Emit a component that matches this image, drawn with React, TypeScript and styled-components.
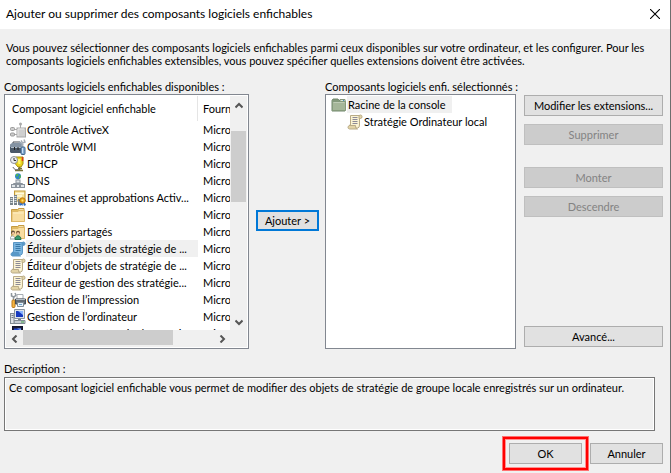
import React from "react";
import styled, { createGlobalStyle, css } from "styled-components";

const GlobalStyle = createGlobalStyle`
  * { box-sizing: border-box; }
  html, body, #root { margin: 0; padding: 0; height: 100%; }
  body {
    font-family: Lato, "Open Sans", sans-serif;
    font-size: 11px;
    line-height: 13px;
    color: #000;
    background: #f0f0f0;
  }
`;

const Dialog = styled.main`
  display: flex;
  flex-direction: column;
  min-height: 100vh;
  background: #f0f0f0;
  border-right: 1px solid #6e6e6e;
`;

const TitleBar = styled.header`
  display: flex;
  align-items: center;
  justify-content: space-between;
  height: 29px;
  padding: 0 10px 2px 6px;
  background: #fff;
`;

const Title = styled.h1`
  margin: 0;
  font: 400 12px/16px Lato, "Open Sans", sans-serif;
  white-space: nowrap;
`;

const CloseButton = styled.button`
  display: flex;
  padding: 0;
  border: 0;
  background: none;
`;

const Intro = styled.p`
  margin: 12px 6px 0;
`;

const Columns = styled.section`
  display: grid;
  grid-template-columns: minmax(0, 245fr) auto minmax(0, 191fr) 147px;
  flex: 1;
  min-height: 269px;
  margin: 13px 7px 0 4px;
`;

const Field = styled.div`
  display: flex;
  flex-direction: column;
  gap: 1px;
  min-width: 0;
`;

const FieldLabel = styled.div`
  white-space: nowrap;
`;

const ListFrame = styled.div`
  display: grid;
  grid-template-columns: minmax(0, 1fr) 17px;
  grid-template-rows: minmax(0, 1fr) 17px;
  flex: 1 0 255px;
  height: 255px;
  padding: 1px;
  border: 1px solid #828790;
  background: #fff;
`;

const ListView = styled.div`
  overflow: hidden;
  height: 100%;
`;

const SnapInTable = styled.table`
  width: 100%;
  table-layout: fixed;
  border-collapse: separate;
  border-spacing: 0;
`;

const NameHeader = styled.th`
  width: 192px;
  height: 25px;
  padding: 0 6px;
  border-right: 1px solid #e5e5e5;
  font-weight: 400;
  text-align: left;
  white-space: nowrap;
`;

const VendorHeader = styled.th`
  padding: 0 0 0 5px;
  overflow: hidden;
  font-weight: 400;
  text-align: left;
  white-space: nowrap;
`;

const NameCell = styled.td`
  height: 17px;
  padding: 0 0 0 4px;
  overflow: hidden;
`;

const NameContent = styled.div`
  display: flex;
  align-items: center;
  height: 17px;
`;

const ItemText = styled.span<{ $selected?: boolean }>`
  flex: 1;
  padding-left: 1px;
  line-height: 17px;
  white-space: nowrap;
  background: ${(p) => (p.$selected ? "#f0f0f0" : "transparent")};
`;

const VendorCell = styled.td`
  padding: 0 0 0 5px;
  overflow: hidden;
  white-space: nowrap;
`;

const VScroll = styled.div`
  display: flex;
  flex-direction: column;
  align-items: center;
  background: #f0f0f0;
`;

const HScroll = styled.div`
  display: flex;
  align-items: center;
  background: #f0f0f0;
`;

const ScrollCorner = styled.div`
  background: #f0f0f0;
`;

const ArrowButton = styled.button`
  display: flex;
  align-items: center;
  justify-content: center;
  width: 17px;
  height: 17px;
  padding: 0;
  border: 0;
  background: none;
`;

const VTrack = styled.div`
  flex: 1;
  width: 15px;
  padding-top: 18px;
`;

const VThumb = styled.div`
  height: 71px;
  background: #cdcdcd;
`;

const HTrack = styled.div`
  flex: 1;
  height: 15px;
  margin-bottom: 2px;
`;

const HThumb = styled.div`
  width: 79%;
  height: 15px;
  background: #cdcdcd;
`;

const AddArea = styled.div`
  padding: 130px 6px 0 7px;
`;

const Tree = styled.ul`
  flex: 1;
  margin: 0;
  padding: 1px 5px;
  border: 1px solid #828790;
  background: #fff;
  list-style: none;
`;

const TreeItem = styled.li<{ $depth: number }>`
  display: flex;
  align-items: center;
  height: 17px;
  padding-left: ${(p) => p.$depth * 16}px;
`;

const TreeText = styled.span<{ $selected?: boolean }>`
  padding: 0 6px 0 1px;
  line-height: 17px;
  white-space: nowrap;
  background: ${(p) => (p.$selected ? "#f0f0f0" : "transparent")};
`;

const Actions = styled.div`
  display: flex;
  flex-direction: column;
  gap: 8px;
  padding: 15px 0 2px 8px;
`;

const Spacer = styled.div<{ $grow?: boolean }>`
  ${(p) => (p.$grow ? css`flex: 1;` : css`height: 6px;`)}
`;

const Button = styled.button<{ $width?: number; $primary?: boolean }>`
  width: ${(p) => (p.$width ? `${p.$width}px` : "100%")};
  height: 21px;
  padding: 0;
  border: ${(p) => (p.$primary ? "2px solid #0078d7" : "1px solid #adadad")};
  background: #e1e1e1;
  color: #000;
  font: inherit;
  white-space: nowrap;

  &:disabled {
    border-color: #bfbfbf;
    background: #ccc;
    color: #838383;
  }
`;

const DescriptionField = styled.section`
  display: flex;
  flex-direction: column;
  gap: 2px;
  margin: 13px 15px 0 4px;
`;

const DescriptionBox = styled.div`
  min-height: 54px;
  padding: 3px 4px;
  border: 1px solid #767676;
  box-shadow: inset 0 0 0 1px #fff;
`;

const Footer = styled.footer`
  display: flex;
  justify-content: flex-end;
  gap: 8px;
  padding: 12px 7px 9px;
`;

const Highlight = styled.div`
  position: relative;

  &::after {
    content: "";
    position: absolute;
    inset: -6px;
    border: 2px solid #f00;
    box-shadow: 0 0 0 1px #ff7070, inset 0 0 0 1px #ff9090;
    pointer-events: none;
  }
`;

const Icon = styled.svg.attrs({ width: 16, height: 16, viewBox: "0 0 16 16", "aria-hidden": true })`
  flex: none;
  display: block;
`;

const ActiveXIcon = () => (
  <Icon>
    <path d="M10.5 2.5v4M1 7.500h6M1 12.500h6" stroke="#aaa" />
    <circle cx="10.500" cy="2" r="1.500" fill="#aaa" />
    <rect x=".5" y="5.500" width="4" height="3" rx="1" fill="#ccc" stroke="#999" />
    <rect x=".5" y="11" width="4" height="3" rx="1" fill="#ccc" stroke="#999" />
    <rect x="7" y="6" width="8.500" height="9" fill="#cfcfcf" stroke="#a9a9a9" />
    <path d="M8 14V7h6" fill="none" stroke="#e8e8e8" />
  </Icon>
);

const WmiIcon = () => (
  <Icon>
    <path d="M3 5V3h7v2" fill="none" stroke="#454b52" />
    <path d="M0 5.500 2 4h9l2 2v3H0z" fill="#8493a3" />
    <path d="M0 8h13v6H1L0 13z" fill="#4b5968" />
    <path d="M1 8.500h11" stroke="#aebbc8" />
    <path d="M4.500 8v3M8 8v3" stroke="#222" />
    <path d="m9 3 3 2 2 9" fill="none" stroke="#9aa9b6" strokeWidth="1.500" />
    <path d="M11 1.500 12.500 4 15 3l-1-2.500M13 5l-1 3" fill="none" stroke="#a6aeb7" strokeWidth="1.500" />
    <rect x="11" y="8" width="4" height="7.500" rx="1" fill="#83abd4" stroke="#466789" />
    <path d="M12.500 9v5" stroke="#cde0f3" />
  </Icon>
);

const DhcpIcon = () => (
  <Icon>
    <path d="M5.500 1H13v7l-2 3H8L5.500 8z" fill="#e9d31e" stroke="#a58e12" />
    <path d="M7.500 3h3v5h-2z" fill="#fff66a" />
    <path d="M9.500 11v4M5 14.500h8M8 12.500h4" stroke="#77713a" strokeWidth="1.500" />
    <path d="M12.500 1v4" stroke="#e03b16" strokeWidth="1.500" />
    <path d="M3 11c1 3 4 3 6 2" fill="none" stroke="#64646a" />
    <circle cx="4" cy="4" r="3.500" fill="#eceef0" stroke="#8c9196" />
    <path d="M4 2v2.500h2" fill="none" stroke="#333" />
  </Icon>
);

const DnsIcon = () => (
  <Icon>
    <circle cx="8" cy="3.200" r="3" fill="#2e87c4" />
    <path d="M6 1.500c2-1 3 0 2 1L6.500 4zM9 4l1.500-2L11 4 9 6z" fill="#53b946" />
    <path d="M8 6v3M3.500 12v-1.500h9V12" fill="none" stroke="#89919a" />
    <rect x="6" y="7" width="4" height="3" fill="#e0e5e9" stroke="#8b949e" />
    <rect x="1.500" y="11.500" width="4" height="3" fill="#e0e5e9" stroke="#8b949e" />
    <rect x="6.500" y="11.500" width="3" height="3" fill="#e0e5e9" stroke="#8b949e" />
    <rect x="10.500" y="11.500" width="4" height="3" fill="#e0e5e9" stroke="#8b949e" />
  </Icon>
);

const DomainsIcon = () => (
  <Icon>
    <rect x="4.500" y="1" width="10.500" height="10" fill="#f6e29c" stroke="#c19a38" />
    <path d="M5.500 3.500h8.500M7 6h5" stroke="#fffbe1" strokeWidth="1.500" />
    <path d="M0 7h3v8H0zM4 5h3v10H4zM8 9h2v6H8z" fill="#77828a" />
    <path d="M.5 8.500h2m-2 2h2m-2 2h2m2-6h2m-2 2h2m-2 2h2m-2 2h2" stroke="#dce4e9" />
    <path d="m10.500 12-1 4 2-1 1 1 .5-3 1 3 2-1-2-4z" fill="#306ec2" />
    <circle cx="12.500" cy="10.500" r="2.700" fill="#eaa91b" stroke="#bb7910" />
    <circle cx="12.500" cy="10.500" r="1" fill="#ffe37a" />
  </Icon>
);

const FolderIcon = () => (
  <Icon>
    <path d="M1.500 14.500v-12h6l1-1h5.500v13z" fill="#e3bd62" stroke="#c49a41" />
    <path d="M9 2.500h4.500V4H9z" fill="#fff" />
    <path d="M2 4.500h6l1-1h5.500v11H2z" fill="#f8dda0" stroke="#dfb968" />
    <path d="M3 6h10.500" stroke="#fff0c3" />
  </Icon>
);

const SharedFoldersIcon = () => (
  <Icon>
    <path d="M1.500 14.500v-12h6l1-1h5.500v13z" fill="#e3bd62" stroke="#c49a41" />
    <path d="M9 2.500h4.500V4H9z" fill="#fff" />
    <path d="M2 4.500h6l1-1h5.500v11H2z" fill="#f8dda0" stroke="#dfb968" />
    <path d="M0 15c0-4 5-4 5 0z" fill="#fff" stroke="#8e9ca2" />
    <path d="M5 15.500c0-5 6-5 6 0z" fill="#36996e" stroke="#26734f" />
    <circle cx="3" cy="8.500" r="2" fill="#65513c" />
    <circle cx="3.300" cy="9.300" r="1.300" fill="#f2c6a0" />
    <circle cx="8" cy="8.800" r="2" fill="#704c2d" />
    <circle cx="8" cy="9.600" r="1.400" fill="#f2c6a0" />
  </Icon>
);

const ScrollIcon = ({ blue = false }: { blue?: boolean }) => {
  const edge = blue ? "#5a96c4" : "#b9ab86";
  const paper = blue ? "#79b4df" : "#fbf3d3";
  const roll = blue ? "#5798c8" : "#e2d3a6";
  const ink = blue ? "#3979a8" : "#8c8a96";
  return (
    <Icon>
      <path d="M3.500 1.500h9v9.500q0 3-2 3h-8v-3h1z" fill={paper} stroke={edge} />
      <path d="M12 4.500V2.500q0-1.500 1.500-1.500T15 2.700q0 1.800-1.500 1.800z" fill={roll} stroke={edge} />
      <path d="M2.500 11.500h6q-.5 3 2 3.500h-8q-1.500-.3-1.500-1.700t1.500-1.800z" fill={roll} stroke={edge} />
      <path d="M5.500 3.500h5M5.500 5.500h5M5.500 7.500h5M5.500 9.500h5" stroke={ink} />
    </Icon>
  );
};

const PrintIcon = () => (
  <Icon>
    <path d="M1.500 1v3L4 5l2-2-1-2M3.500 5v3" fill="none" stroke="#8e969d" strokeWidth="1.500" />
    <rect x="2" y="8" width="3" height="7.500" rx="1" fill="#f4b543" stroke="#bd7a1a" />
    <path d="M7 2.500h6V7H7z" fill="#fff" stroke="#a7adb3" />
    <path d="M5.500 7h10v5h-10z" fill="#636c74" stroke="#444c54" />
    <path d="M6 7.500h9" stroke="#b4bdc5" />
    <path d="M7.500 10.500h6v4h-6z" fill="#e8f2fa" stroke="#7f8c96" />
    <path d="M9 12.500h3" stroke="#6ca5d0" />
  </Icon>
);

const ComputerIcon = () => (
  <Icon>
    <path d="M4.500.500h10v9h-10z" fill="#dce4ec" stroke="#8994a0" />
    <path d="M6 2h7v6H6z" fill="#163abf" />
    <path d="M8 2h5v4z" fill="#89b4ff" />
    <path d="M8 10h3v1H8z" fill="#77818b" />
    <path d="M4 11.500h11v3H4z" fill="#c6cdd4" stroke="#818b94" />
    <rect x=".5" y="4.500" width="3.500" height="10" fill="#dfe3e7" stroke="#818b94" />
    <path d="M1.500 6.500h2m-2 2h2" stroke="#747d85" />
    <path d="M11 13h3" stroke="#45a346" />
  </Icon>
);

const SecurityIcon = () => (
  <Icon>
    <rect x="2.500" y=".5" width="10" height="11" fill="#1b1c38" stroke="#11132a" />
    <path d="M4 2.500h7v6H4z" fill="#1f45cf" />
    <path d="M7 2.500h4v2z" fill="#7ca7ff" />
    <path d="M2 13h12v2H2z" fill="#c6cdd4" />
  </Icon>
);

const RootFolderIcon = () => (
  <Icon>
    <path d="M1 14V3.500L2 2h5l1 1.500h6V14z" fill="#84997b" stroke="#71876c" />
    <path d="M9 2.500h5V5H9z" fill="#dbe8d7" stroke="#82947b" />
    <path d="M12 3.500h1" stroke="#4b92c0" />
    <path d="M1.500 4.500h13v9h-13z" fill="#a5b699" stroke="#859a7c" />
    <path d="M2.500 5.500h11" stroke="#bfccb6" />
  </Icon>
);

const arrowPaths = {
  up: "M0.500 6.500 4 3l3.500 3.500",
  down: "M.5 2.500 4 6l3.500-3.500",
  left: "M5.500.500 2 4l3.500 3.500",
  right: "M2.500.500 6 4 2.500 7.500",
};

const Arrow = ({ direction }: { direction: keyof typeof arrowPaths }) => (
  <svg width="8" height="8" viewBox="0 0 8 8" aria-hidden="true">
    <path d={arrowPaths[direction]} fill="none" stroke="#555" strokeWidth="2" />
  </svg>
);

const snapIns: { name: string; icon: React.ReactNode; selected?: boolean }[] = [
  { name: "Contrôle ActiveX", icon: <ActiveXIcon /> },
  { name: "Contrôle WMI", icon: <WmiIcon /> },
  { name: "DHCP", icon: <DhcpIcon /> },
  { name: "DNS", icon: <DnsIcon /> },
  { name: "Domaines et approbations Activ...", icon: <DomainsIcon /> },
  { name: "Dossier", icon: <FolderIcon /> },
  { name: "Dossiers partagés", icon: <SharedFoldersIcon /> },
  { name: "Éditeur d’objets de stratégie de ...", icon: <ScrollIcon blue />, selected: true },
  { name: "Éditeur d’objets de stratégie de ...", icon: <ScrollIcon /> },
  { name: "Éditeur de gestion des stratégie...", icon: <ScrollIcon /> },
  { name: "Gestion de l’impression", icon: <PrintIcon /> },
  { name: "Gestion de l’ordinateur", icon: <ComputerIcon /> },
  { name: "Gestion de la stratégie de sécuri...", icon: <SecurityIcon /> },
];

export default function App() {
  return (
    <>
      <GlobalStyle />
      <Dialog>
        <TitleBar>
          <Title>Ajouter ou supprimer des composants logiciels enfichables</Title>
          <CloseButton aria-label="Fermer">
            <svg width="10" height="10" viewBox="0 0 10 10" aria-hidden="true">
              <path d="m0 0 10 10M10 0 0 10" stroke="#000" strokeWidth="1.1" />
            </svg>
          </CloseButton>
        </TitleBar>

        <Intro>
          Vous pouvez sélectionner des composants logiciels enfichables parmi ceux disponibles sur votre ordinateur, et
          les configurer. Pour les composants logiciels enfichables extensibles, vous pouvez spécifier quelles
          extensions doivent être activées.
        </Intro>

        <Columns>
          <Field>
            <FieldLabel id="available-label">Composants logiciels enfichables disponibles :</FieldLabel>
            <ListFrame>
              <ListView>
                <SnapInTable aria-labelledby="available-label">
                  <thead>
                    <tr>
                      <NameHeader scope="col">Composant logiciel enfichable</NameHeader>
                      <VendorHeader scope="col">Fourn</VendorHeader>
                    </tr>
                  </thead>
                  <tbody>
                    {snapIns.map((item, index) => (
                      <tr key={index} aria-selected={item.selected}>
                        <NameCell>
                          <NameContent>
                            {item.icon}
                            <ItemText $selected={item.selected}>{item.name}</ItemText>
                          </NameContent>
                        </NameCell>
                        <VendorCell>Micros</VendorCell>
                      </tr>
                    ))}
                  </tbody>
                </SnapInTable>
              </ListView>
              <VScroll>
                <ArrowButton aria-label="Défiler vers le haut"><Arrow direction="up" /></ArrowButton>
                <VTrack><VThumb /></VTrack>
                <ArrowButton aria-label="Défiler vers le bas"><Arrow direction="down" /></ArrowButton>
              </VScroll>
              <HScroll>
                <ArrowButton aria-label="Défiler vers la gauche"><Arrow direction="left" /></ArrowButton>
                <HTrack><HThumb /></HTrack>
                <ArrowButton aria-label="Défiler vers la droite"><Arrow direction="right" /></ArrowButton>
              </HScroll>
              <ScrollCorner />
            </ListFrame>
          </Field>

          <AddArea>
            <Button $width={63} $primary>Ajouter &gt;</Button>
          </AddArea>

          <Field>
            <FieldLabel id="selected-label">Composants logiciels enfi. sélectionnés :</FieldLabel>
            <Tree role="tree" aria-labelledby="selected-label">
              <TreeItem $depth={0} role="treeitem" aria-selected="true">
                <RootFolderIcon />
                <TreeText $selected>Racine de la console</TreeText>
              </TreeItem>
              <TreeItem $depth={1} role="treeitem">
                <ScrollIcon />
                <TreeText>Stratégie Ordinateur local</TreeText>
              </TreeItem>
            </Tree>
          </Field>

          <Actions>
            <Button>Modifier les extensions...</Button>
            <Button disabled>Supprimer</Button>
            <Spacer />
            <Button disabled>Monter</Button>
            <Button disabled>Descendre</Button>
            <Spacer $grow />
            <Button>Avancé...</Button>
          </Actions>
        </Columns>

        <DescriptionField>
          <div id="description-label">Description :</div>
          <DescriptionBox role="region" aria-labelledby="description-label">
            Ce composant logiciel enfichable vous permet de modifier des objets de stratégie de groupe locale
            enregistrés sur un ordinateur.
          </DescriptionBox>
        </DescriptionField>

        <Footer>
          <Highlight>
            <Button $width={73}>OK</Button>
          </Highlight>
          <Button $width={73}>Annuler</Button>
        </Footer>
      </Dialog>
    </>
  );
}
